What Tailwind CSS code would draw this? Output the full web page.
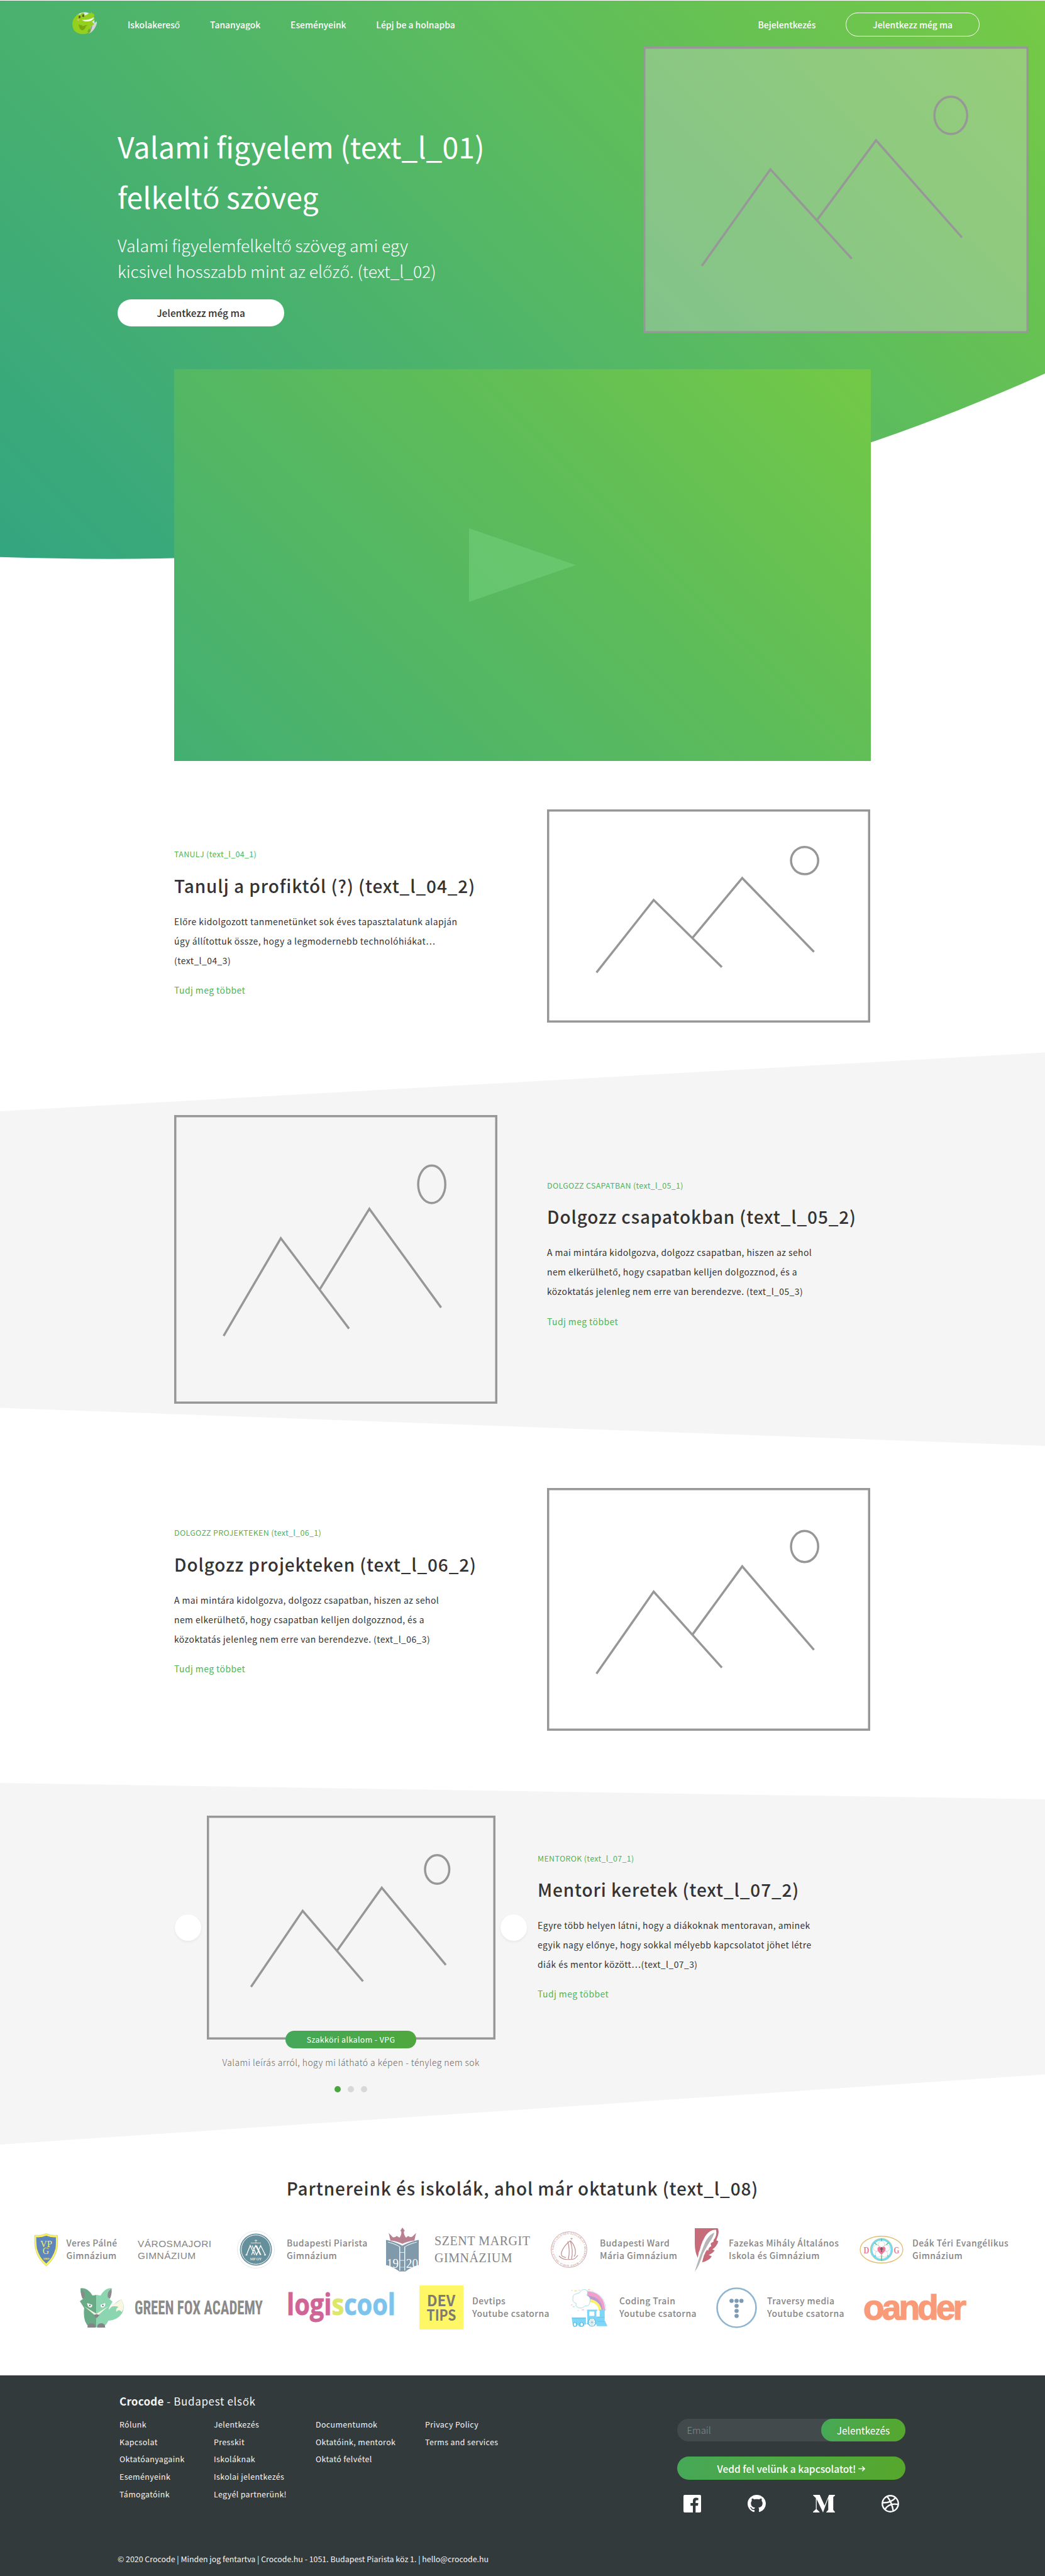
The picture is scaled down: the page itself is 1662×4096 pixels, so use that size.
<!DOCTYPE html>
<html lang="hu">
<head>
<meta charset="utf-8">
<title>Crocode</title>
<script src="https://cdn.jsdelivr.net/npm/@tailwindcss/browser@4"></script>
</head>
<body class="bg-white">
<div class="relative w-[1662px] h-[4096px] overflow-hidden bg-white text-[#333] font-['Noto_Sans_CJK_SC','Open_Sans',sans-serif]">

  <!-- Hero -->
  <header class="relative h-[1210px]">
    <svg class="absolute left-0 top-0 w-[1662px] h-[900px]" viewBox="0 0 1662 900" fill="none">
      <defs><linearGradient id="hero" gradientUnits="userSpaceOnUse" x1="193" y1="1081" x2="1469" y2="-194"><stop offset="0" stop-color="#33a580"/><stop offset=".5" stop-color="#53b766"/><stop offset="1" stop-color="#76ca45"/></linearGradient></defs>
      <path d="M0 1H1662V594C1108 843.1 554 903.4 0 885.8Z" fill="url(#hero)"/>
    </svg>

    <nav class="relative flex h-[78px] items-center text-[13.9px] font-medium leading-5 text-white">
      <svg class="ml-[114px] -mt-[5px] w-[42px] h-[37px]" viewBox="215 50 80 106" preserveAspectRatio="none">
        <ellipse cx="254" cy="95" rx="30" ry="41" fill="#d9eef6"/>
        <path d="M291 96Q293 104 286 124Q278 146 266 152L263 140Q274 120 280 106Z" fill="#d3d6d8"/>
        <path d="M268 150L263 140Q270 122 278 112Q276 136 268 150Z" fill="#9a9a92"/>
        <path d="M228 72Q233 58 240 66Q246 52 252 58Q255 63 254 70Q262 66 268 57L272 60L275 52L277 59Q283 60 284 68Q283 80 268 86Q255 90 246 88Q252 96 266 93Q276 90 281 84L284 76Q287 92 276 98Q284 103 282 110L271 121Q277 131 268 143Q262 153 252 154Q232 154 222 136Q215 116 218 97Q220 82 228 72Z" fill="#94d11f"/>
        <path d="M236 110Q246 112 249 118Q256 112 264 112L258 118Q256 132 248 137Q238 134 236 110Z" fill="#7aa80f"/>
        <path d="M247 89Q262 96 281 83Q276 97 256 96Q249 94 247 89Z" fill="#fff"/>
        <path d="M268 128L263 140L266 152L272 142Q274 134 268 128Z" fill="#6fb022"/>
        <ellipse cx="239" cy="76" rx="3.2" ry="6.5" fill="#6b5a3a"/><ellipse cx="250" cy="70" rx="3.4" ry="6.5" fill="#6b5a3a"/>
        <ellipse cx="235" cy="89" rx="3.5" ry="3.5" fill="#f3b490"/>
      </svg>
      <div class="ml-[47px] flex gap-[47.8px] whitespace-nowrap">
        <a>Iskolakereső</a><a>Tananyagok</a><a>Eseményeink</a><a>Lépj be a holnapba</a>
      </div>
      <div class="ml-auto mr-[104px] flex items-center gap-[47.6px] whitespace-nowrap">
        <a>Bejelentkezés</a>
        <a class="flex h-[38px] w-[213px] items-center justify-center rounded-full border border-white pb-px">Jelentkezz még ma</a>
      </div>
    </nav>

    <div class="relative flex h-[509px] justify-between pl-[187px] pr-[26px] text-white">
      <div class="pt-[114px]">
        <h1 class="whitespace-nowrap text-[46.3px] leading-[79.5px] tracking-[.07px]">Valami figyelem (text_l_01)<br>felkeltő szöveg</h1>
        <p class="mt-[18px] whitespace-nowrap text-[26.5px] font-light leading-[41.3px] tracking-[-.03px]">Valami figyelemfelkeltő szöveg ami egy<br>kicsivel hosszabb mint az előző. (text_l_02)</p>
        <a class="mt-6 flex h-[43px] w-[265px] items-center justify-center rounded-full bg-white text-[15.4px] font-medium text-[#333]">Jelentkezz még ma</a>
      </div>
      <div class="-mt-[4px] h-[456px] w-[613px] bg-[#d8d8d8]/35 shadow-[inset_0_0_0_3.5px_#979797]">
        <svg class="h-[456px] w-[613px]" viewBox="0 0 1000 1000" preserveAspectRatio="none" fill="none" stroke="#979797" stroke-width="3.5"><path vector-effect="non-scaling-stroke" d="M152 765L330 428L541 740M451 605L604 327L827 666"/><ellipse vector-effect="non-scaling-stroke" cx="798" cy="240" rx="42.5" ry="65"/></svg>
      </div>
    </div>

    <div class="relative mx-auto flex h-[623px] w-[1108px] items-center justify-center bg-[linear-gradient(45deg,#43af72,#5aba5d_50%,#73c946)]">
      <svg class="h-[117px] w-[170px]" viewBox="0 0 170 117"><path d="M0 0L170 58.5L0 117Z" fill="#76d180" fill-opacity=".5"/></svg>
    </div>
  </header>

  <!-- Learn -->
  <section class="flex h-[463px] pl-[277px] pt-[77px]">
    <div class="w-[593px] pt-[61px]">
      <p class="text-[12.4px] leading-5 tracking-[.38px] text-[#4db555]">TANULJ (text_l_04_1)</p>
      <h2 class="mt-[19.500px] text-[27.9px] font-medium leading-10 tracking-[.93px]">Tanulj a profiktól (?) (text_l_04_2)</h2>
      <p class="mt-[22.300px] whitespace-nowrap text-[13.9px] leading-[31.16px] tracking-[.46px]">Előre kidolgozott tanmenetünket sok éves tapasztalatunk alapján<br>úgy állítottuk össze, hogy a legmodernebb technolóhiákat…<br>(text_l_04_3)</p>
      <a class="mt-[21px] block text-[13.9px] leading-5 tracking-[.46px] text-[#4db555]">Tudj meg többet</a>
    </div>
    <div class="h-[339px] w-[514px] shadow-[inset_0_0_0_3.5px_#979797]">
      <svg class="h-[339px] w-[514px]" viewBox="0 0 1000 1000" preserveAspectRatio="none" fill="none" stroke="#979797" stroke-width="3.5"><path vector-effect="non-scaling-stroke" d="M153 765L330 425L541 740M450 603L604 322L826 668"/><ellipse vector-effect="non-scaling-stroke" cx="797" cy="240" rx="42" ry="64"/></svg>
    </div>
  </section>

  <!-- Teamwork -->
  <section class="relative flex h-[626px] pl-[277px] pt-[100px]">
    <svg class="absolute left-0 top-0 h-[626px] w-[1662px]" viewBox="0 0 1662 626"><path d="M0 94L1662 .5V626L0 565.5Z" fill="#f5f5f5"/></svg>
    <div class="relative h-[459px] w-[514px] shadow-[inset_0_0_0_3.5px_#979797]">
      <svg class="h-[459px] w-[514px]" viewBox="0 0 1000 1000" preserveAspectRatio="none" fill="none" stroke="#979797" stroke-width="3.5"><path vector-effect="non-scaling-stroke" d="M153 765L330 427L541 740M450 605L604 325L826 667"/><ellipse vector-effect="non-scaling-stroke" cx="797" cy="240" rx="42" ry="65"/></svg>
    </div>
    <div class="relative ml-[79px] pt-[102px]">
      <p class="text-[12.4px] leading-5 tracking-[.37px] text-[#4db555]">DOLGOZZ CSAPATBAN (text_l_05_1)</p>
      <h2 class="mt-[19px] text-[27.9px] font-medium leading-10 tracking-[.9px]">Dolgozz csapatokban (text_l_05_2)</h2>
      <p class="mt-[22px] whitespace-nowrap text-[13.9px] leading-[31.16px] tracking-[.45px]">A mai mintára kidolgozva, dolgozz csapatban, hiszen az sehol<br>nem elkerülhető, hogy csapatban kelljen dolgozznod, és a<br>közoktatás jelenleg nem erre van berendezve. (text_l_05_3)</p>
      <a class="mt-[21.500px] block text-[13.9px] leading-5 tracking-[.46px] text-[#4db555]">Tudj meg többet</a>
    </div>
  </section>

  <!-- Projects -->
  <section class="flex h-[536px] pl-[277px] pt-[67px]">
    <div class="w-[593px] pt-[61px]">
      <p class="text-[12.4px] leading-5 tracking-[.37px] text-[#4db555]">DOLGOZZ PROJEKTEKEN (text_l_06_1)</p>
      <h2 class="mt-[19.500px] text-[27.9px] font-medium leading-10 tracking-[.9px]">Dolgozz projekteken (text_l_06_2)</h2>
      <p class="mt-[22px] whitespace-nowrap text-[13.9px] leading-[31.16px] tracking-[.45px]">A mai mintára kidolgozva, dolgozz csapatban, hiszen az sehol<br>nem elkerülhető, hogy csapatban kelljen dolgozznod, és a<br>közoktatás jelenleg nem erre van berendezve. (text_l_06_3)</p>
      <a class="mt-[21px] block text-[13.9px] leading-5 tracking-[.46px] text-[#4db555]">Tudj meg többet</a>
    </div>
    <div class="h-[386px] w-[514px] shadow-[inset_0_0_0_3.5px_#979797]">
      <svg class="h-[386px] w-[514px]" viewBox="0 0 1000 1000" preserveAspectRatio="none" fill="none" stroke="#979797" stroke-width="3.5"><path vector-effect="non-scaling-stroke" d="M153 765L330 427L541 740M450 604L604 323L826 667"/><ellipse vector-effect="non-scaling-stroke" cx="797" cy="241" rx="42" ry="64"/></svg>
    </div>
  </section>

  <!-- Mentors -->
  <section class="relative flex h-[575px] pl-[278px] pt-[52px]">
    <svg class="absolute left-0 top-0 h-[575px] w-[1662px]" viewBox="0 0 1662 575"><path d="M0 0L1662 26V463.500L0 575Z" fill="#f5f5f5"/></svg>
    <div class="relative flex w-[560px] flex-col items-center">
      <div class="flex w-full items-center justify-between">
        <span class="size-[42px] rounded-full bg-white shadow-[0_2px_4px_rgba(0,0,0,0.06)]"></span>
        <div class="h-[356px] w-[459px] shadow-[inset_0_0_0_3.5px_#979797]">
          <svg class="h-[356px] w-[459px]" viewBox="0 0 1000 1000" preserveAspectRatio="none" fill="none" stroke="#979797" stroke-width="3.5"><path vector-effect="non-scaling-stroke" d="M153 765L332 425L541 740M451 603L606 322L828 667"/><ellipse vector-effect="non-scaling-stroke" cx="798" cy="240" rx="42" ry="64"/></svg>
        </div>
        <span class="size-[42px] rounded-full bg-white shadow-[0_2px_4px_rgba(0,0,0,0.06)]"></span>
      </div>
      <span class="relative -mt-[14px] flex h-7 w-[208px] items-center justify-center rounded-full bg-[linear-gradient(90deg,#44a75a,#4fa73d)] text-[12.4px] leading-5 tracking-[.4px] text-white">Szakköri alkalom - VPG</span>
      <p class="mt-[12px] whitespace-nowrap text-[13.9px] font-light leading-5 tracking-[.46px] text-[#666]">Valami leírás arról, hogy mi látható a képen - tényleg nem sok</p>
      <div class="mt-[27.500px] flex gap-[10.4px]">
        <i class="size-[10.4px] rounded-full bg-[#4ba53f]"></i><i class="size-[10.4px] rounded-full bg-[#d8d8d8]"></i><i class="size-[10.4px] rounded-full bg-[#d8d8d8]"></i>
      </div>
    </div>
    <div class="relative ml-[17px] pt-[58px]">
      <p class="text-[12.4px] leading-5 tracking-[.37px] text-[#4db555]">MENTOROK (text_l_07_1)</p>
      <h2 class="mt-[19px] text-[27.9px] font-medium leading-10 tracking-[.9px]">Mentori keretek (text_l_07_2)</h2>
      <p class="mt-[22px] whitespace-nowrap text-[13.9px] leading-[31.16px] tracking-[.45px]">Egyre több helyen látni, hogy a diákoknak mentoravan, aminek<br>egyik nagy előnye, hogy sokkal mélyebb kapcsolatot jöhet létre<br>diák és mentor között…(text_l_07_3)</p>
      <a class="mt-[21px] block text-[13.9px] leading-5 tracking-[.46px] text-[#4db555]">Tudj meg többet</a>
    </div>
  </section>

  <!-- Partners -->
  <section class="h-[367px] pt-[49px] text-[#858585]">
    <h2 class="text-center text-[27.9px] font-medium leading-10 tracking-[.92px] text-[#333]">Partnereink és iskolák, ahol már oktatunk (text_l_08)</h2>

    <div class="mt-[43px] flex h-[70px] items-center pl-[54px] text-[13.9px] font-medium leading-[19.65px] tracking-[.46px] whitespace-nowrap">
      <div class="flex w-[165px] items-center gap-[13px]">
        <svg class="h-[53px] w-[38.500px] overflow-visible" viewBox="103 364 73 183" preserveAspectRatio="none">
          <path d="M105 375Q122 380 140 366Q158 380 174 375Q176 420 173 450Q166 505 140 545Q114 505 107 450Q104 420 105 375Z" fill="#fbf35c" stroke="#9aa48a" stroke-width="1"/>
          <path d="M110 386Q126 388 140 377Q154 388 169 386Q170 425 168 448Q161 498 140 531Q119 498 112 448Q110 425 110 386Z" fill="#5f86ba"/>
          <g transform="scale(1 1.8368)" fill="#f6f06a" font-family="Liberation Serif" text-anchor="middle" letter-spacing="0"><text x="140" y="239" font-size="27" textLength="36" lengthAdjust="spacingAndGlyphs">VP</text><text x="139" y="261" font-size="27">G</text><text x="140" y="277.500" font-size="9" font-weight="700">1869</text></g>
        </svg>
        <p>Veres Pálné<br>Gimnázium</p>
      </div>
      <p class="w-[158px] -mt-[1px] font-['Liberation_Sans'] text-[15.4px] font-normal leading-[19px] tracking-[.5px]">VÁROSMAJORI<br>GIMNÁZIUM</p>
      <div class="flex w-[237px] items-center gap-[19px]">
        <svg class="size-[60px]" viewBox="0 0 60 60" fill="none">
          <circle cx="30" cy="30" r="29.500" stroke="#e4eaec"/><circle cx="30" cy="30" r="25.500" fill="#668f9c"/><circle cx="30" cy="30" r="23.300" stroke="#fff"/>
          <path d="M30 14v5M28 15.500h4M22 19.500h16" stroke="#d5e2e5"/><path d="M15 38.500L21 23.500L28 38.500M23 38.500L29.500 23.500L37 38.500M31 23.500L38 38.500M24 23.500L31 38.500L37.500 23.500L45 38.500M13.500 38.500h3M43 38.500h3" stroke="#fff" stroke-width="1.300"/>
          <text x="30" y="46.500" fill="#fff" font-family="Liberation Serif" font-size="6" letter-spacing="0" text-anchor="middle">MP OY</text>
        </svg>
        <p>Budapesti Piarista<br>Gimnázium</p>
      </div>
      <div class="flex w-[262px] items-center gap-[25px]">
        <svg class="h-[70px] w-[52px] overflow-visible" viewBox="1158 336 98 240" preserveAspectRatio="none">
          <path d="M1166 365L1178 388Q1184 392 1190 381L1198 391Q1204 380 1204 360L1201 352L1207 336L1214 352L1211 360Q1212 380 1218 391L1224 381Q1232 392 1237 385L1248 365L1243 406Q1222 410 1207 424Q1192 410 1171 406Z" fill="#b98092"/>
          <path d="M1158 403Q1184 412 1207 435Q1230 412 1256 403V540Q1236 548 1216 575H1198Q1178 548 1158 540Z" fill="#8099ab"/>
          <path d="M1164 415Q1186 424 1199 441V570M1250 415Q1228 424 1214 441V570M1200 472h14M1200 515h14M1200 552h14" fill="none" stroke="#fff" stroke-width="2.500"/>
          <g transform="scale(1 1.8368)" fill="#fff" font-family="Liberation Serif" font-size="40" letter-spacing="0"><text x="1160" y="302" textLength="36" lengthAdjust="spacingAndGlyphs">19</text><text x="1218" y="303" textLength="36" lengthAdjust="spacingAndGlyphs">20</text></g>
        </svg>
        <p class="font-['Liberation_Serif'] text-[20px] font-normal leading-[27.5px] tracking-[.57px]">SZENT MARGIT<br>GIMNÁZIUM</p>
      </div>
      <div class="flex w-[229px] items-center gap-[20px]">
        <svg class="size-[58px]" viewBox="0 0 58 58" fill="none" stroke="#c08e90">
          <circle cx="29" cy="29" r="28.300" stroke-width=".8"/><circle cx="29" cy="29" r="21" stroke-width=".5" stroke-dasharray="1 2" stroke="#e6cfd0"/>
          <path d="M31 15C20 23 13 37 19 40Q22 41.500 24 41.500M27 16Q31 30 28 44M31 15Q36 30 33 44M31 15C38 21 42 34 37 40M13 39Q19 46 30 44.500Q38 46 43 38" stroke-width="1.200"/><path d="M33 10v4M31 11.500h4" stroke-width=".7"/>
          <path id="ward" d="M29 53.300A24.300 24.300 0 1 1 29.100 53.300" stroke="none"/>
          <text fill="#b58486" stroke="none" font-family="Liberation Sans" font-size="4" letter-spacing="0" textLength="150"><textPath href="#ward">MÁRIA ISKOLA • TUDÁS-LELKISÉG-SZOLGÁLAT • BUDAPESTI WARD</textPath></text>
        </svg>
        <p>Budapesti Ward<br>Mária Gimnázium</p>
      </div>
      <div class="flex w-[262px] items-center gap-[16px]">
        <svg class="h-[69px] w-[38px]" viewBox="518 338 72 238" preserveAspectRatio="none">
          <path d="M518 338H587Q592 350 588 378L583 404L589 410Q584 440 571 454L578 460Q572 476 560 485L569 492Q562 515 540 525L547 478L565 430L576 360L560 372L540 430L530 470L527 500Q518 470 518 420Z" fill="#c56b79"/>
          <path d="M582 347Q566 344 552 375Q532 430 530 500L540 470L538 500L548 480L553 450L558 462Q560 440 568 436L565 420Q578 412 574 404Q586 380 582 347Z" fill="#fff"/>
          <path d="M577 362Q562 372 550 412Q534 480 518 576Q531 548 542 480Q552 445 561 418Q573 390 577 362Z" fill="#b6b6b6"/>
        </svg>
        <p>Fazekas Mihály Általános<br>Iskola és Gimnázium</p>
      </div>
      <div class="flex items-center gap-[14px]">
        <svg class="h-[44px] w-[70px]" viewBox="0 0 70 44" fill="none">
          <ellipse cx="35" cy="22" rx="34" ry="21.300" stroke="#e3bf75" stroke-width="1.400"/>
          <circle cx="35" cy="22" r="16.200" fill="#fff" stroke="#6edcf5" stroke-width="3.500"/><circle cx="35" cy="22" r="17.700" stroke="#dcc27e" stroke-width=".8"/>
          <path d="M35 4V40M24 11L46 33M46 11L24 33" stroke="#5fc489" stroke-width="1.600"/>
          <g fill="#fff" stroke="#b9b9b9" stroke-width=".6"><circle cx="35" cy="13.500" r="5"/><circle cx="27" cy="19.500" r="5"/><circle cx="43" cy="19.500" r="5"/><circle cx="30" cy="29" r="5"/><circle cx="40" cy="29" r="5"/></g>
          <path d="M35 30C24 22 29 15 35 18.500C41 15 46 22 35 30Z" fill="#ee7a9b"/><path d="M35 18v8M32.500 21h5" stroke="#555" stroke-width="1.300"/>
          <g fill="#e5819c" font-family="Liberation Serif" font-size="15" font-weight="700" letter-spacing="0"><text x="6.500" y="27.500" textLength="9" lengthAdjust="spacingAndGlyphs">D</text><text x="54.500" y="27.500" textLength="9" lengthAdjust="spacingAndGlyphs">G</text></g>
        </svg>
        <p>Deák Téri Evangélikus<br>Gimnázium</p>
      </div>
    </div>

    <div class="mt-[22px] flex h-[70px] items-center pl-[127px] text-[13.9px] font-medium leading-[19.65px] tracking-[.46px] whitespace-nowrap">
      <div class="flex w-[331px] items-center gap-[17px]">
        <svg class="h-[63px] w-[70px]" viewBox="240 665 132 217" preserveAspectRatio="none">
          <path d="M322 846Q318 805 330 778Q345 745 364 727Q378 768 366 805Q352 842 322 846Z" fill="#8bd6b0"/><path d="M333 765Q352 745 364 727Q377 768 366 797Q356 776 350 796Q346 780 356 768Q344 762 333 768Z" fill="#faf6e2"/>
          <path d="M242 667Q262 660 278 706L290 703V880H268Q248 850 253 775L240 737L250 724Q241 700 242 667Z" fill="#69ab86"/>
          <path d="M336 667Q318 660 302 706L290 703V880H310Q334 850 327 775L338 740L328 724Q337 700 336 667Z" fill="#8bd6b0"/>
          <path d="M244 670Q258 690 254 716L248 724Q242 700 244 670ZM334 670Q320 690 324 716L330 724Q337 700 334 670Z" fill="#8b8b8d"/>
          <path d="M253 766L290 822L326 764L290 806Z" fill="#f7f3df"/>
          <path d="M262 748L277 757Q278 774 268 771Q262 764 262 748ZM316 748L302 757Q301 774 311 771Q317 764 316 748Z" fill="#fff"/><ellipse cx="270" cy="761" rx="2.500" ry="5" fill="#57806b"/><ellipse cx="309" cy="761" rx="2.500" ry="5" fill="#57806b"/>
          <path d="M281 814L290 808L299 814L290 830ZM263 882Q262 858 275 858Q288 860 287 882ZM292 882Q291 860 304 858Q316 858 316 882Z" fill="#858587"/>
        </svg>
        <svg class="h-[46px] w-[206px]" viewBox="0 0 206 46"><text x="0" y="34" fill="#8a8a8a" font-family="Roboto Condensed" font-weight="700" font-size="31.500" textLength="204" lengthAdjust="spacingAndGlyphs" letter-spacing="0">GREEN FOX ACADEMY</text></svg>
      </div>
      <svg class="h-[70px] w-[209px]" viewBox="0 0 209 70"><text x="-2" y="47" font-family="Open Sans" font-weight="700" font-size="46" textLength="173" lengthAdjust="spacingAndGlyphs" letter-spacing="0" stroke-width=".8"><tspan fill="#d06497" stroke="#d06497">logi</tspan><tspan fill="#dde868" stroke="#dde868">s</tspan><tspan fill="#7cc4ee" stroke="#7cc4ee">cool</tspan></text></svg>
      <div class="flex w-[241px] items-center gap-[14px]">
        <svg class="size-[70px]" viewBox="0 0 70 70"><path d="M0 0H70V70H0Z" fill="#fff766"/><g fill="#7d7c6f" font-family="Noto Sans CJK SC" font-weight="700" font-size="24" letter-spacing="0"><text x="12" y="33" textLength="45" lengthAdjust="spacingAndGlyphs">DEV</text><text x="11.500" y="55.500" textLength="47" lengthAdjust="spacingAndGlyphs">TIPS</text></g></svg>
        <p>Devtips<br>Youtube csatorna</p>
      </div>
      <div class="flex w-[231px] items-center gap-[19px]">
        <svg class="h-[62px] w-[58px]" viewBox="145 668 109 212" preserveAspectRatio="none">
          <path d="M190 686Q246 690 247 790H238Q238 712 190 712Z" fill="#f49ecb"/><path d="M190 708Q238 712 240 790H233Q232 730 190 726Z" fill="#b99bd3"/><path d="M196 726Q232 735 237 790H228Q226 745 196 744Z" fill="#fdf06a"/><path d="M190 684Q248 690 249 788" fill="none" stroke="#86cfe6" stroke-width="1.500"/>
          <path d="M170 695Q176 672 190 678Q198 690 193 708Q206 720 202 742Q200 770 187 766Q178 784 166 774Q158 770 161 752Q148 745 151 722Q150 702 162 700Q166 694 170 695Z" fill="#fff" stroke="#8fd0dc" stroke-width="1.800"/>
          <path d="M193 786H224V793H221V824H231V790H229V786H249V790H246V848Q250 855 254 876H222V866H194V826Z" fill="#7dd6f8"/><path d="M200 796h15v24h-15z" fill="#fff"/>
          <path d="M147 828H190V866H186Q184 880 176 880Q168 880 166 868H165Q164 880 156 880Q150 878 150 862Z" fill="#7dd6f8"/>
          <g fill="#fff" stroke="#5fbadb" stroke-width="2.500"><ellipse cx="208" cy="855" rx="11" ry="22"/><ellipse cx="157" cy="866" rx="5" ry="10"/><ellipse cx="177" cy="866" rx="5" ry="10"/></g><path d="M208 833V877M197 855H219M200 840L216 870M216 840L200 870M149 834H188M190 862H196M224 828H246M224 850H248" stroke="#5fbadb" stroke-width="1.500"/>
          <g><circle cx="159" cy="684" r="4" fill="#fbe3a6"/><circle cx="199" cy="677" r="4" fill="#fcd3ba"/><circle cx="147" cy="760" r="3" fill="#f9cbe0"/><circle cx="153" cy="770" r="3.500" fill="#bfe6f5"/><circle cx="181" cy="787" r="4" fill="#f9cbe0"/><circle cx="148" cy="682" r="2.500" fill="#f9cbe0"/><circle cx="210" cy="685" r="2.500" fill="#fbe3a6"/><circle cx="170" cy="680" r="2.500" fill="#f9cbe0"/><circle cx="167" cy="790" r="2.500" fill="#fbe3a6"/></g>
        </svg>
        <p>Coding Train<br>Youtube csatorna</p>
      </div>
      <div class="flex w-[234px] items-center gap-[16px]">
        <svg class="size-[65px]" viewBox="0 0 65 65"><circle cx="32.500" cy="32.500" r="31" fill="none" stroke="#8fb5d1" stroke-width="2.600"/><g fill="#7d9bb4"><circle cx="24.500" cy="21.500" r="3.300"/><circle cx="32.500" cy="21.500" r="3.300"/><circle cx="40.200" cy="21.500" r="3.300"/><circle cx="32.500" cy="29.500" r="3.300"/><circle cx="32.500" cy="37.500" r="3.300"/><circle cx="32.500" cy="45.500" r="3.300"/></g></svg>
        <p>Traversy media<br>Youtube csatorna</p>
      </div>
      <svg class="h-[70px] w-[164px]" viewBox="0 0 164 70"><text x="0" y="54" fill="#f99b78" stroke="#f99b78" stroke-width="1.400" font-family="Liberation Sans" font-weight="700" font-size="56" textLength="160" lengthAdjust="spacingAndGlyphs" letter-spacing="-4">oander</text></svg>
    </div>
  </section>

  <!-- Footer -->
  <footer class="h-[319px] bg-[#333a3c] pt-[26px] text-[#f5f5f5]">
    <div class="flex h-[192px] justify-between pl-[190px] pr-[222px]">
      <div>
        <p class="text-[17px] leading-[30px] tracking-[.66px]"><b class="tracking-[.25px]">Crocode</b> - Budapest elsők</p>
        <div class="mt-[9px] grid grid-cols-[150px_162px_174px_150px] whitespace-nowrap text-[12.4px] leading-[27.7px] tracking-[.38px]">
          <p>Rólunk<br>Kapcsolat<br>Oktatóanyagaink<br>Eseményeink<br>Támogatóink</p>
          <p>Jelentkezés<br>Presskit<br>Iskoláknak<br>Iskolai jelentkezés<br>Legyél partnerünk!</p>
          <p>Documentumok<br>Oktatóink, mentorok<br>Oktató felvétel</p>
          <p>Privacy Policy<br>Terms and services</p>
        </div>
      </div>
      <div class="w-[363.500px] pt-[43px] text-white">
        <div class="flex h-[36.400px] items-center justify-between rounded-full bg-[#434a4c]">
          <span class="pl-4 text-[15px] font-light leading-5 text-[#868c8d]">Email</span>
          <span class="flex h-full w-[134px] items-center justify-center rounded-full bg-[linear-gradient(100deg,#46a857,#56a72c)] text-[15.4px] leading-5">Jelentkezés</span>
        </div>
        <div class="mt-6 flex h-[36.400px] items-center justify-center rounded-full bg-[linear-gradient(95deg,#46a857,#56a72c)] text-[15.5px] font-medium leading-5">Vedd fel velünk a kapcsolatot!&nbsp;<svg class="mt-[2px] h-[9px] w-[11px]" viewBox="0 0 11 9" fill="none" stroke="#fff" stroke-width="1.600"><path d="M.3 4.500H10M6.300 .8L10 4.500L6.300 8.200"/></svg></div>
        <div class="mt-6 flex h-7 items-center justify-between pl-[10.500px] pr-[10px]">
          <svg class="size-7" viewBox="0 0 28 28"><path fill="#fff" d="M2 0H26Q28 0 28 2V26Q28 28 26 28H19.300V17.200H23L23.600 12.900H19.300V10.200Q19.300 8.600 21 8.600H23.600V4.900Q22.200 4.600 20.300 4.600Q15 4.600 15 9.700V12.900H11.200V17.200H15V28H2Q0 28 0 26V2Q0 0 2 0Z"/></svg>
          <svg class="h-7 w-[29px]" viewBox="0 0 16 16" preserveAspectRatio="none"><path fill="#fff" d="M8 0C3.580 0 0 3.580 0 8c0 3.540 2.290 6.530 5.470 7.590.4.070.550-.170.550-.380 0-.190-.010-.820-.010-1.490-2.010.370-2.530-.490-2.690-.940-.090-.230-.480-.940-.820-1.130-.280-.150-.680-.520-.010-.530.630-.010 1.080.580 1.230.820.720 1.210 1.870.870 2.330.660.070-.520.280-.870.510-1.070-1.780-.200-3.640-.890-3.640-3.950 0-.870.310-1.590.820-2.150-.080-.200-.360-1.020.080-2.120 0 0 .670-.210 2.200.820.640-.180 1.320-.270 2-.270s1.360.090 2 .270c1.530-1.040 2.200-.820 2.200-.820.440 1.100.160 1.920.080 2.120.510.560.820 1.270.820 2.150 0 3.070-1.870 3.750-3.650 3.950.290.250.540.730.540 1.480 0 1.070-.010 1.930-.010 2.200 0 .210.150.460.550.380A8.010 8.010 0 0 0 16 8c0-4.420-3.580-8-8-8Z"/></svg>
          <svg class="h-7 w-[35px]" viewBox="877 549 114 96" preserveAspectRatio="none"><path fill="#fff" d="M878 549H912L937 607L960 549H991V552L982 561V631L991 642V645H946V642L956 631V568L929 645L896 572V627L911 642V645H877V642L892 627V566L878 552Z"/></svg>
          <svg class="size-7" viewBox="0 0 28 28" fill="none" stroke="#fff" stroke-width="2.400"><circle cx="14" cy="14" r="12.700"/><path d="M9 2.500Q16.500 12 18.700 25.500M1.500 12.500Q15 13 22.500 4.500M5.500 23Q12 12.500 26.500 15.200"/></svg>
        </div>
      </div>
    </div>
    <p class="mt-[64px] pl-[187px] text-[12.4px] leading-5">© 2020 Crocode | Minden jog fentartva | Crocode.hu - 1051. Budapest Piarista köz 1. | hello@crocode.hu</p>
  </footer>
</div>
</body>
</html>
